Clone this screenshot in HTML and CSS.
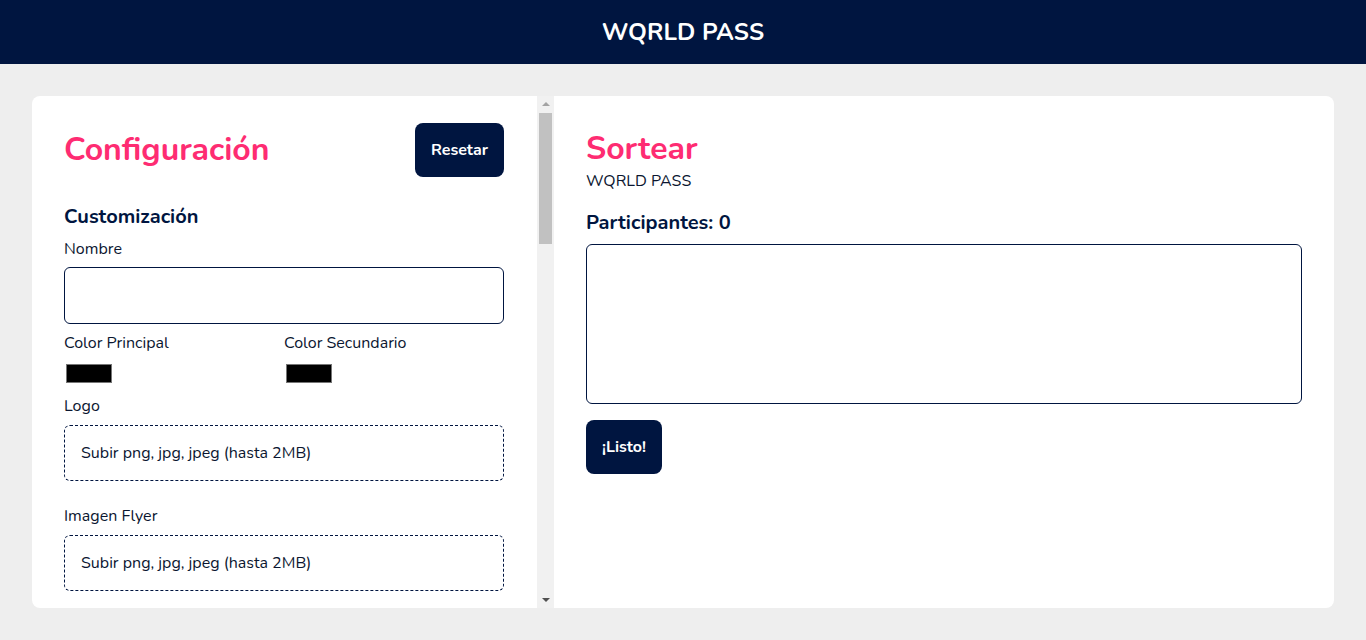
FILE: index.html
```html
<!DOCTYPE html>
<html lang="es">
<head>
<meta charset="utf-8">
<title>WQRLD PASS - Sorteo</title>
<link rel="stylesheet" href="styles.css">
</head>
<body>
<header class="topbar">
  <div class="brand">WQRLD PASS</div>
</header>
<main class="main">
  <div class="board">
    <section class="config">
      <div class="config-body">
        <div class="config-head">
          <h1 class="title">Configuración</h1>
          <button class="btn btn-reset">Resetar</button>
        </div>
        <h2 class="section-title">Customización</h2>
        <label class="label label-first">Nombre</label>
        <div class="input"></div>
        <div class="colors">
          <div class="color-field">
            <label class="label">Color Principal</label>
            <div class="swatch"></div>
          </div>
          <div class="color-field">
            <label class="label">Color Secundario</label>
            <div class="swatch"></div>
          </div>
        </div>
        <label class="label label-logo">Logo</label>
        <div class="upload">Subir png, jpg, jpeg (hasta 2MB)</div>
        <label class="label label-flyer">Imagen Flyer</label>
        <div class="upload">Subir png, jpg, jpeg (hasta 2MB)</div>
      </div>
      <div class="scrollbar">
        <div class="sb-btn"><span class="arrow-up"></span></div>
        <div class="sb-track"><div class="sb-thumb"></div></div>
        <div class="sb-btn"><span class="arrow-down"></span></div>
      </div>
    </section>
    <section class="draw">
      <h1 class="title">Sortear</h1>
      <p class="subtitle">WQRLD PASS</p>
      <h2 class="count">Participantes: 0</h2>
      <div class="textarea"></div>
      <button class="btn btn-ready">¡Listo!</button>
    </section>
  </div>
</main>
</body>
</html>
```
FILE: styles.css
```css
* { box-sizing: border-box; }
html, body { margin: 0; padding: 0; }
body {
  background: #eeeeee;
  font-family: "Nunito", "Lato", "Open Sans", sans-serif;
  color: #0b1630;
  height: 640px;
  overflow: hidden;
}
.topbar {
  height: 64px;
  background: #001540;
  display: flex;
  align-items: center;
  justify-content: center;
}
.brand {
  color: #ffffff;
  font-weight: 700;
  font-size: 24px;
  letter-spacing: 0.1px;
}
.main {
  padding: 32px;
  height: 576px;
}
.board {
  height: 512px;
  display: grid;
  grid-template-columns: 522px 1fr;
  background: #ffffff;
  border-radius: 8px;
  overflow: hidden;
}
.config {
  display: flex;
  height: 512px;
  overflow: hidden;
}
.config-body {
  flex: 1;
  min-width: 0;
  padding: 27px 33px 0 32px;
  overflow: hidden;
}
.scrollbar {
  width: 17px;
  flex: none;
  background: #f1f1f1;
  display: flex;
  flex-direction: column;
}
.sb-btn {
  height: 16px;
  display: flex;
  align-items: center;
  justify-content: center;
}
.sb-track {
  flex: 1;
  padding: 1px 2px 0 2px;
}
.sb-thumb {
  height: 131px;
  background: #c1c1c1;
}
.arrow-up {
  width: 0;
  height: 0;
  border-left: 4px solid transparent;
  border-right: 4px solid transparent;
  border-bottom: 4px solid #a3a3a3;
}
.arrow-down {
  width: 0;
  height: 0;
  border-left: 4px solid transparent;
  border-right: 4px solid transparent;
  border-top: 4px solid #505050;
}
.config-head {
  display: flex;
  align-items: center;
  justify-content: space-between;
}
.title {
  margin: 0;
  font-size: 32px;
  line-height: 40px;
  font-weight: 700;
  color: #fe2c72;
}
.btn {
  border: none;
  background: #001540;
  color: #ffffff;
  font-family: inherit;
  font-weight: 700;
  font-size: 16px;
  border-radius: 8px;
  height: 54px;
  padding: 0;
}
.btn-reset { width: 89px; }
.btn-ready { width: 76px; margin-top: 16px; }
.section-title {
  margin: 28px 0 0 0;
  font-size: 20px;
  line-height: 24px;
  font-weight: 700;
  color: #001540;
}
.label {
  display: block;
  font-size: 16px;
  line-height: 20px;
  color: #0b1630;
}
.label-first { margin-top: 10px; }
.input {
  margin-top: 8px;
  height: 57px;
  border: 1px solid #001540;
  border-radius: 6px;
}
.colors {
  display: grid;
  grid-template-columns: 1fr 1fr;
  margin-top: 9px;
}
.swatch {
  margin: 11px 0 0 2px;
  width: 46px;
  height: 19px;
  background: #000000;
  border: 1px solid #767676;
}
.label-logo { margin-top: 13px; }
.label-flyer { margin-top: 25px; }
.upload {
  margin-top: 9px;
  height: 56px;
  border: 1px dashed #001540;
  border-radius: 6px;
  padding: 0 16px;
  display: flex;
  align-items: center;
  font-size: 16px;
  color: #0b1630;
}
.draw {
  padding: 33px 32px 32px 32px;
}
.subtitle {
  margin: 2px 0 0 0;
  font-size: 16px;
  line-height: 20px;
  color: #0b1630;
}
.count {
  margin: 20px 0 0 0;
  font-size: 20px;
  line-height: 24px;
  font-weight: 700;
  color: #001540;
}
.textarea {
  margin-top: 9px;
  height: 160px;
  border: 1px solid #001540;
  border-radius: 6px;
}
```
